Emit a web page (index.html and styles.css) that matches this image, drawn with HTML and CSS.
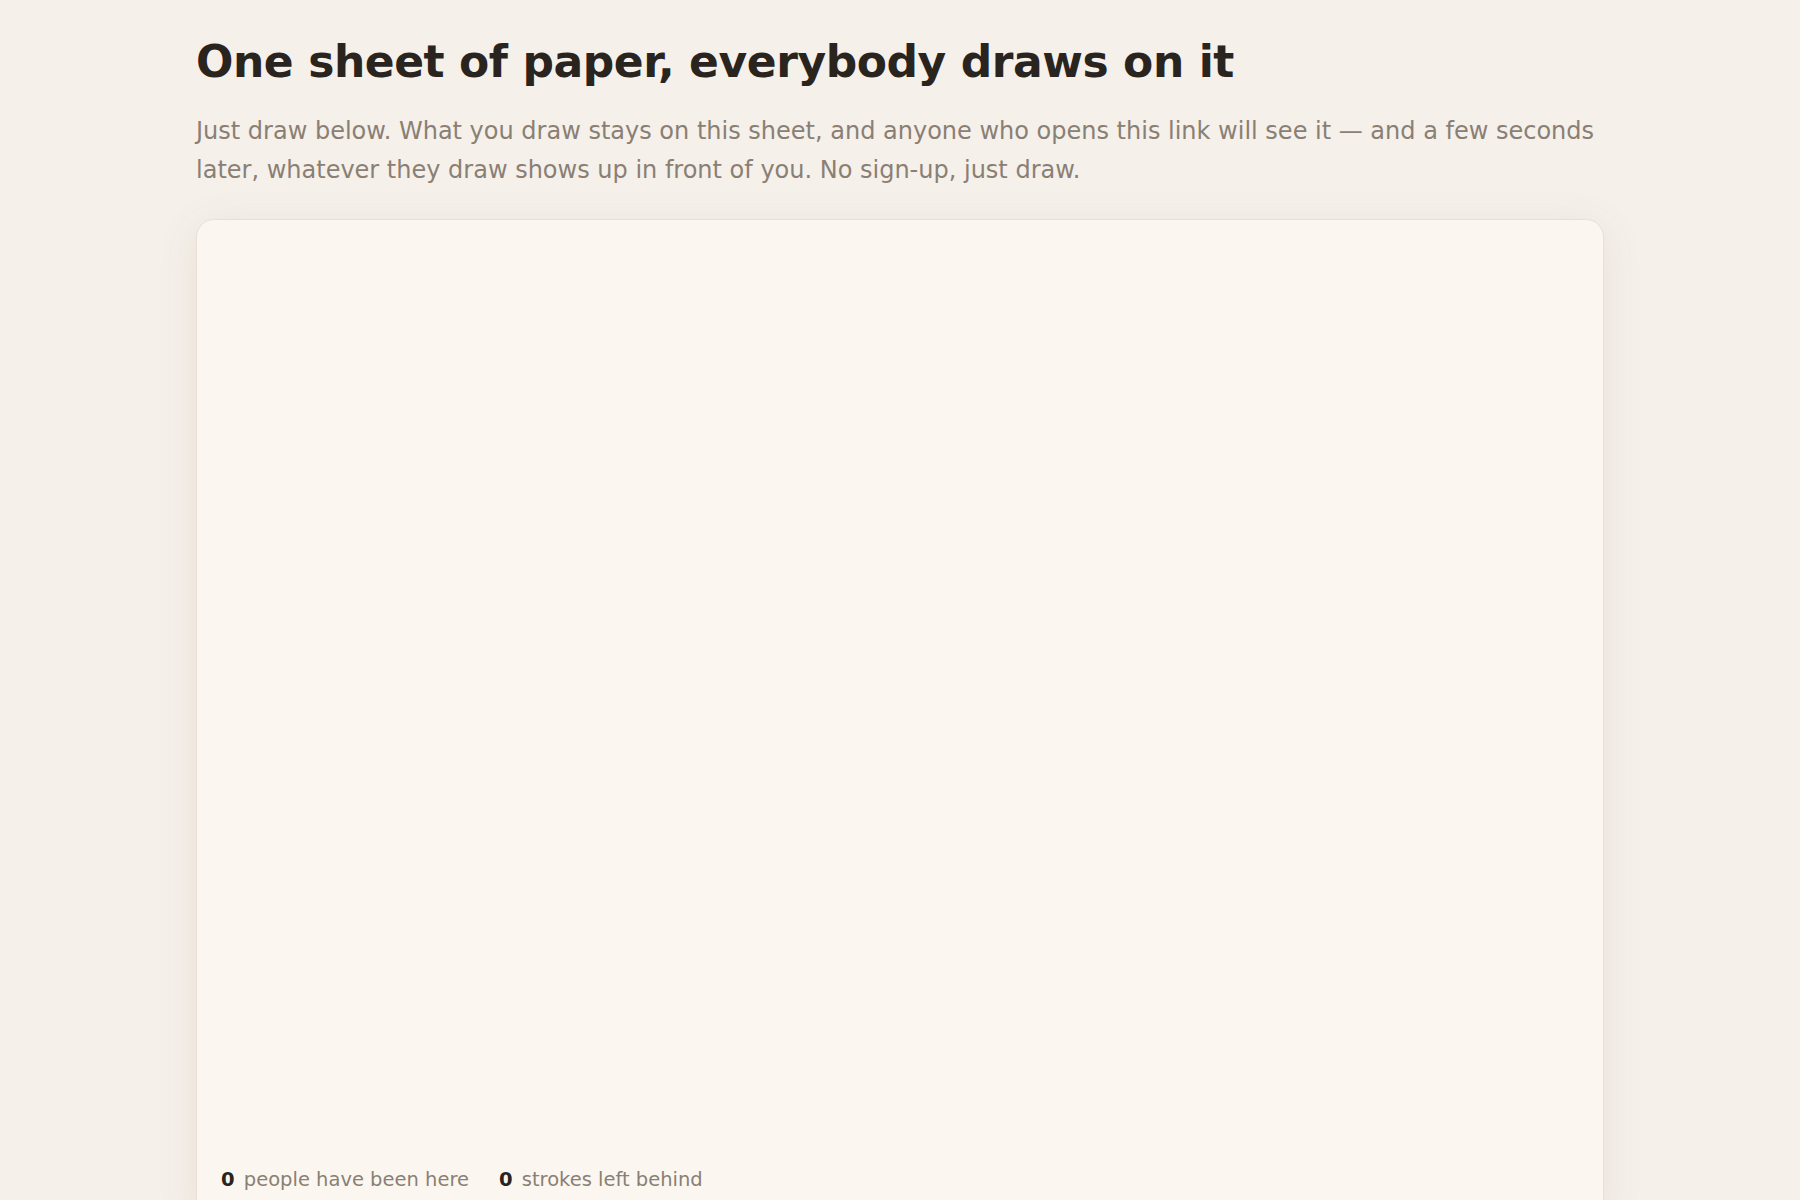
FILE: index.html
```html
<!DOCTYPE html>
<html lang="en">
<head>
<meta charset="utf-8">
<title>One sheet of paper</title>
<link rel="stylesheet" href="styles.css">
</head>
<body>
<main class="page">
  <h1 class="title">One sheet of paper, everybody draws on it</h1>
  <p class="lead">Just draw below. What you draw stays on this sheet, and anyone who opens this link will see it — and a few seconds later, whatever they draw shows up in front of you. No sign-up, just draw.</p>
  <section class="sheet">
    <div class="canvas"></div>
    <div class="stats">
      <span class="stat"><b>0</b> people have been here</span>
      <span class="stat"><b>0</b> strokes left behind</span>
    </div>
  </section>
</main>
</body>
</html>
```

FILE: styles.css
```css
html, body {
  margin: 0;
  padding: 0;
}
body {
  background: #f5f0ea;
  font-family: "DejaVu Sans", "Noto Sans", sans-serif;
  color: #2a241f;
}
.page {
  max-width: 1408px;
  margin: 0 auto;
  padding: 36px 0 40px;
}
.title {
  margin: 0;
  font-size: 44px;
  font-weight: 700;
  line-height: 1.2;
  letter-spacing: -0.01em;
  color: #2a241f;
}
.lead {
  margin: 23px 0 28px;
  font-size: 24px;
  line-height: 1.64;
  color: #8a7f74;
}
.sheet {
  background: #fbf7f0;
  border: 1px solid #e9e0d4;
  border-radius: 18px;
  box-shadow: 0 8px 40px rgba(120, 95, 60, 0.10);
  overflow: hidden;
}
.canvas {
  height: 948px;
}
.stats {
  display: flex;
  gap: 30px;
  padding: 0 24px 28px;
  font-size: 19.5px;
  color: #8a7f74;
}
.stat b {
  color: #2a241f;
  margin-right: 3px;
}
```
